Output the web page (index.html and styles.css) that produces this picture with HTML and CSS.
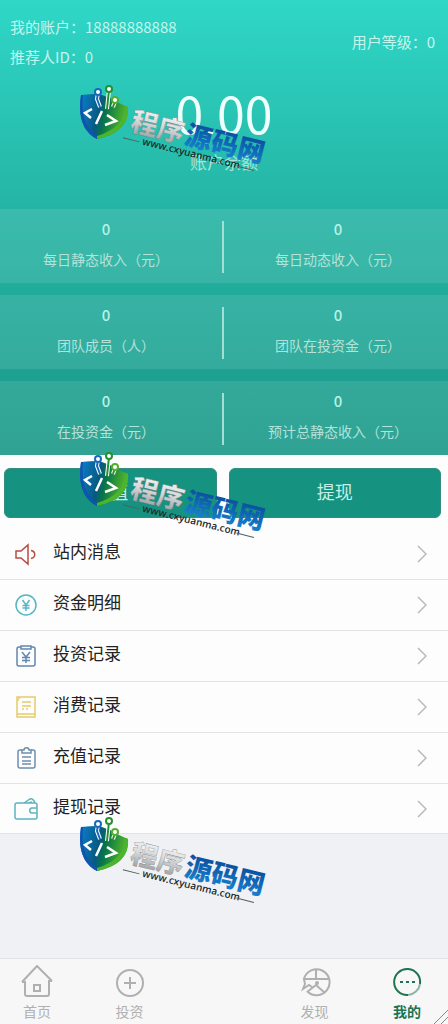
FILE: index.html
```html
<!DOCTYPE html>
<html lang="zh-CN">
<head>
    <meta charset="UTF-8">
    <meta name="viewport" content="width=device-width, initial-scale=1.0">
    <title>我的</title>
    <link rel="stylesheet" href="styles.css">
</head>
<body>

    <header class="account">
        <div class="account-info">
            <div>
                <p>我的账户：18888888888</p>
                <p>推荐人ID：0</p>
            </div>
            <p class="level">用户等级：0</p>
        </div>

        <div class="balance">
            <strong>0.00</strong>
            <span>账户余额</span>
        </div>

        <div class="stats">
            <dl class="stat-row">
                <div class="stat"><dt>每日静态收入（元）</dt><dd>0</dd></div>
                <div class="stat"><dt>每日动态收入（元）</dt><dd>0</dd></div>
            </dl>
            <dl class="stat-row">
                <div class="stat"><dt>团队成员（人）</dt><dd>0</dd></div>
                <div class="stat"><dt>团队在投资金（元）</dt><dd>0</dd></div>
            </dl>
            <dl class="stat-row">
                <div class="stat"><dt>在投资金（元）</dt><dd>0</dd></div>
                <div class="stat"><dt>预计总静态收入（元）</dt><dd>0</dd></div>
            </dl>
        </div>
    </header>

    <main>
        <div class="actions">
            <button type="button">充值</button>
            <button type="button">提现</button>
        </div>

        <nav class="menu">
            <a href="#">
                <svg class="icon red" viewBox="0 0 24 24"><path d="M2 9h5l7-6v19l-7-6H2z"/><path d="M17 8.500c5 1 5 7 0 8"/></svg>
                <span>站内消息</span>
                <svg class="arrow" viewBox="0 0 10 18"><path d="M1 1l8 8-8 8"/></svg>
            </a>
            <a href="#">
                <svg class="icon cyan" viewBox="0 0 24 24"><circle cx="12" cy="12" r="10"/><path d="M8.500 7l3.500 5 3.500-5M12 12v6M8.500 12.500h7M8.500 15h7"/></svg>
                <span>资金明细</span>
                <svg class="arrow" viewBox="0 0 10 18"><path d="M1 1l8 8-8 8"/></svg>
            </a>
            <a href="#">
                <svg class="icon blue" viewBox="0 0 24 24"><path d="M7 3H5Q3 3 3 5v15q0 2 2 2h14q2 0 2-2V5q0-2-2-2h-2"/><path d="M7 2h10v3H7z"/><path d="M8 8l4 5 4-5M12 13v6M8 13.500h8M8 16.500h8"/></svg>
                <span>投资记录</span>
                <svg class="arrow" viewBox="0 0 10 18"><path d="M1 1l8 8-8 8"/></svg>
            </a>
            <a href="#">
                <svg class="icon yellow" viewBox="0 0 24 24"><path d="M5 2h16v20H3V2h2v2M3 5h2M3 19h18M8 7h9M8 11h9M8 14h2M12 14h2"/></svg>
                <span>消费记录</span>
                <svg class="arrow" viewBox="0 0 10 18"><path d="M1 1l8 8-8 8"/></svg>
            </a>
            <a href="#">
                <svg class="icon steel" viewBox="0 0 24 24"><path d="M8 4H6Q4 4 4 6v14q0 2 2 2h13q2 0 2-2V6q0-2-2-2h-2"/><path d="M8 7V4h2c0-3 5-3 5 0h2v3zM8 11h9M8 15h9M8 18h9"/></svg>
                <span>充值记录</span>
                <svg class="arrow" viewBox="0 0 10 18"><path d="M1 1l8 8-8 8"/></svg>
            </a>
            <a href="#">
                <svg class="icon teal" viewBox="0 0 24 24"><path d="M23 11V8q0-2-2-2H3Q1 6 1 8v12q0 2 2 2h18q2 0 2-2v-4h-5c-3 0-3-5 0-5h5v5M10 6l6-4q3-1 5 4M14 6l4-1"/></svg>
                <span>提现记录</span>
                <svg class="arrow" viewBox="0 0 10 18"><path d="M1 1l8 8-8 8"/></svg>
            </a>
        </nav>
    </main>

    <nav class="tabbar">
        <a href="#">
            <svg viewBox="0 0 32 32"><path d="M1 17L16 1l15 15M1 17h3v12q0 2 2 2h20q2 0 2-2V16h3"/><path d="M13 20h6v6h-6z"/></svg>
            <span>首页</span>
        </a>
        <a href="#">
            <svg viewBox="0 0 32 32"><circle cx="16" cy="18" r="13"/><path d="M16 12v12M10 18h12"/></svg>
            <span>投资</span>
        </a>
        <span class="tab-gap"></span>
        <a href="#">
            <svg viewBox="0 0 32 32"><path d="M5 14A13 13 0 1 1 8 26M4 14h27M5 14l1 5-2 5 6-4 3 2M8 27l9-7 9 8M17 4v10"/><circle cx="18" cy="18" r="1"/></svg>
            <span>发现</span>
        </a>
        <a href="#" class="active">
            <svg viewBox="0 0 32 32"><path d="M17 30A13 13 0 1 1 29 19"/><path class="fade" d="M29 19a13 13 0 0 1-12 11"/><path d="M9 17h3M15 17h3M21 17h3"/></svg>
            <span>我的</span>
        </a>
        <svg class="grip" viewBox="0 0 14 14"><path d="M0 14L14 0M7 14l7-7"/></svg>
    </nav>

    <!-- site stamp, repeated down the page -->
    <svg class="stamp stamp-top" viewBox="0 0 192 90">
        <defs>
            <linearGradient id="shieldFill" x1="0" y1="0" x2="1" y2="0.2">
                <stop offset="0" stop-color="#0b7fd0"/>
                <stop offset="0.45" stop-color="#075a80"/>
                <stop offset="0.6" stop-color="#087648"/>
                <stop offset="1" stop-color="#53b52b"/>
            </linearGradient>
            <linearGradient id="silver" x1="0" y1="0" x2="0" y2="1">
                <stop offset="0" stop-color="#ffffff"/>
                <stop offset="0.5" stop-color="#d5d8da"/>
                <stop offset="1" stop-color="#8d9295"/>
            </linearGradient>
            <linearGradient id="azure" x1="0" y1="0" x2="0" y2="1">
                <stop offset="0.2" stop-color="#0a4f9e"/>
                <stop offset="1" stop-color="#1a8bd8"/>
            </linearGradient>
            <g id="shield">
                <path fill="url(#shieldFill)" d="M1 10Q10 9 19 9L30 13Q38 18 48 22Q50 47 17 54Q-4 43 1 10z"/>
                <path fill="#0f54ae" d="M1 10Q-4 43 17 54L17 51Q0 40 3 10z"/>
                <path fill="#4cb52d" d="M48 22Q50 47 17 54L17 51Q44 43 46 21z"/>
                <path fill="none" stroke="#fff" stroke-width="4" d="M18 8l-1 6 3 8M29 5l-2 19M35 16l-2 6"/>
                <path fill="none" stroke="#1769bd" stroke-width="2" d="M18 8l-1 6 3 8"/>
                <path fill="none" stroke="#22912f" stroke-width="2" d="M29 5l-2 19M35 16l-2 6"/>
                <circle cx="18" cy="7" r="3" fill="#fff" stroke="#1769bd" stroke-width="2"/>
                <circle cx="29" cy="4" r="3" fill="#fff" stroke="#22912f" stroke-width="2"/>
                <circle cx="35" cy="15" r="3" fill="#fff" stroke="#55ae2f" stroke-width="2"/>
                <path fill="none" stroke="#fff" stroke-width="2.5" d="M12 24l-7 4 6 5M22 26l-6 13M27 30l9 6-11 4"/>
            </g>
        </defs>
        <use href="#shield"/>
        <g transform="translate(49 45) rotate(14)">
            <text class="stamp-name" fill="url(#silver)">程序</text>
            <text class="stamp-name stamp-blue" x="56" fill="url(#azure)">源码网</text>
            <text class="stamp-url" x="16" y="11">www.cxyuanma.com</text>
            <path class="stamp-line" d="M-4 9h17M113 9h18"/>
        </g>
    </svg>
    <svg class="stamp stamp-middle" viewBox="0 0 192 90">
        <use href="#shield"/>
        <g transform="translate(49 45) rotate(14)">
            <text class="stamp-name" fill="url(#silver)">程序</text>
            <text class="stamp-name stamp-blue" x="56" fill="url(#azure)">源码网</text>
            <text class="stamp-url" x="16" y="11">www.cxyuanma.com</text>
            <path class="stamp-line" d="M-4 9h17M113 9h18"/>
        </g>
    </svg>
    <svg class="stamp stamp-bottom" viewBox="0 0 192 90">
        <use href="#shield"/>
        <g transform="translate(49 45) rotate(14)">
            <text class="stamp-name" fill="url(#silver)">程序</text>
            <text class="stamp-name stamp-blue" x="56" fill="url(#azure)">源码网</text>
            <text class="stamp-url" x="16" y="11">www.cxyuanma.com</text>
            <path class="stamp-line" d="M-4 9h17M113 9h18"/>
        </g>
    </svg>

</body>
</html>
```
FILE: styles.css
```css
* {
    box-sizing: border-box;
}
body {
    position: relative;
    display: flex;
    flex-direction: column;
    min-height: 100vh;
    margin: 0;
    background-color: #f0f1f4;
    font-family: "Noto Sans CJK SC", sans-serif;
    font-size: 15px;
}
p, dl, dd {
    margin: 0;
}
a {
    color: inherit;
    text-decoration: none;
}
svg {
    fill: none;
    stroke: currentColor;
}

/* account header */
.account {
    background: linear-gradient(#2fd7c7, #25b5a5 45%, #199887);
    color: #c3f5ed;
}
.account-info {
    display: flex;
    justify-content: space-between;
    padding: 12px 13px 0 10px;
    line-height: 30px;
}
.level {
    padding-top: 15px;
}
.balance {
    display: flex;
    flex-direction: column;
    align-items: center;
    height: 137px;
    padding-top: 10px;
}
.balance strong {
    color: #effffc;
    font-size: 50px;
    font-weight: 400;
    line-height: 60px;
}
.balance span {
    font-size: 17px;
    line-height: 40px;
    color: #a5e4da;
}
.stats {
    display: flex;
    flex-direction: column;
    gap: 12px;
}
.stat-row {
    display: flex;
    height: 74px;
    padding: 12px 0 10px;
    background-color: rgba(255, 255, 255, 0.1);
}
.stat {
    display: flex;
    flex: 1;
    flex-direction: column-reverse;
    justify-content: flex-end;
    text-align: center;
    color: #b2e2da;
}
.stat:first-child {
    flex: 0 0 50%;
    padding-right: 10px;
    border-right: 2px solid #a4dfd6;
}
.stat:last-child {
    padding-left: 4px;
}
.stat dd {
    line-height: 16px;
    font-weight: 500;
    color: #b5f3e9;
}
.stat dt {
    padding-top: 12px;
    font-size: 14px;
    line-height: 20px;
}

/* buttons */
main {
    background-color: #fdfdfd;
}
.actions {
    display: flex;
    gap: 12px;
    padding: 13px 7px 11px 4px;
}
.actions button {
    flex: 1;
    height: 50px;
    padding: 0 0 4px;
    border: 1px solid #358d81;
    border-radius: 6px;
    background-color: #159280;
    color: #c4efe7;
    font-family: inherit;
    font-size: 18px;
}

/* record list */
.menu a {
    display: flex;
    align-items: center;
    height: 51px;
    padding: 0 21px 0 14px;
    border-bottom: 1px solid #e2e3e5;
    color: #222;
    font-size: 17px;
}
.menu a:last-child {
    height: 50px;
}
.menu span {
    flex: 1;
    padding: 0 0 7px 15px;
}
.icon {
    width: 24px;
    height: 24px;
    stroke-width: 1.5;
}
.arrow {
    width: 10px;
    height: 18px;
    color: #b9b9b9;
    stroke-width: 1.5;
}
.red { color: #b94b43; }
.cyan { color: #55b5c6; }
.blue { color: #6286b2; }
.yellow { color: #e5cb69; }
.steel { color: #6d8fae; }
.teal { color: #5eb3bd; }

/* bottom tabs */
.tabbar {
    position: relative;
    display: flex;
    justify-content: space-between;
    height: 66px;
    margin-top: auto;
    padding: 6px 21px 0 17px;
    border-top: 1px solid #dfe2e6;
    background-color: #f7f7f8;
    color: #b0b0b0;
}
.tabbar a, .tab-gap {
    display: flex;
    flex-direction: column;
    align-items: center;
    width: 40px;
    font-size: 14px;
    line-height: 24px;
}
.tabbar a svg {
    width: 32px;
    height: 32px;
    margin-bottom: 2px;
    stroke-width: 2;
}
.tabbar .active {
    color: #207351;
    font-weight: 700;
}
.fade {
    opacity: 0.5;
}
.grip {
    position: absolute;
    right: 0;
    bottom: 0;
    width: 14px;
    height: 14px;
    color: #888;
}

/* stamps lie over the page */
.stamp {
    position: absolute;
    left: 80px;
    width: 192px;
    height: 90px;
    stroke: none;
    pointer-events: none;
}
.stamp-top { top: 85px; }
.stamp-middle { top: 452px; }
.stamp-bottom { top: 817px; }
.stamp-name {
    font-size: 27px;
    font-weight: 900;
    stroke: #777;
    stroke-width: 0.3;
}
.stamp-blue {
    stroke: none;
}
.stamp-url {
    font-family: "Open Sans", sans-serif;
    font-size: 10px;
    font-weight: 600;
    fill: #202a2c;
}
.stamp-line {
    stroke: #52605f;
    stroke-width: 1;
}
```
